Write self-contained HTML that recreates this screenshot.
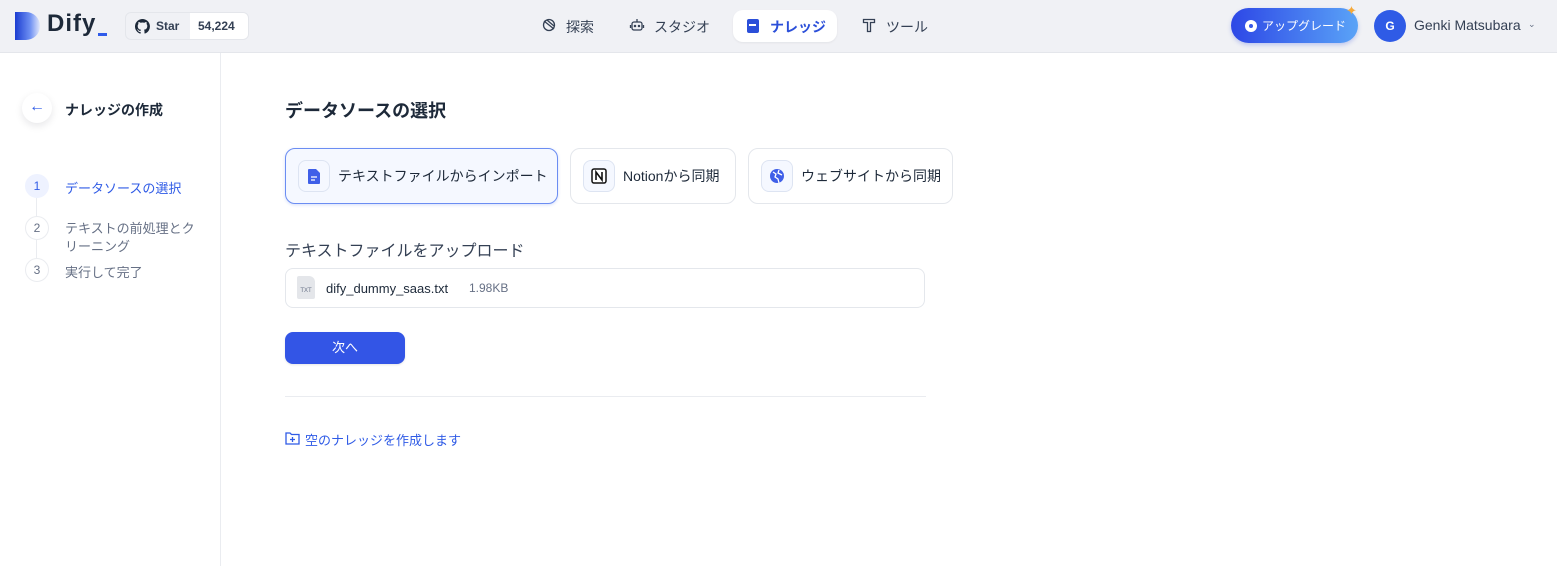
<!DOCTYPE html>
<html><head><meta charset="utf-8"><style>
*{box-sizing:border-box;margin:0;padding:0}
body{width:1557px;height:566px;overflow:hidden;background:#fff;font-family:"Liberation Sans","Noto Sans CJK JP",sans-serif;color:#1d2939;position:relative}
.hdr{position:absolute;left:0;top:0;width:1557px;height:53px;background:#f0f1f5;border-bottom:1px solid #e4e6eb}
.a{position:absolute}
.side{position:absolute;left:0;top:53px;width:221px;height:513px;border-right:1px solid #eaecf0}
.card{position:absolute;top:148px;height:56px;border:1px solid #e4e7ec;border-radius:10px;background:#fff;display:flex;align-items:center;font-size:14px;color:#1d2939}
.ic{width:32px;height:32px;border:1px solid #dde4f2;border-radius:8px;background:#f5f8ff;margin:0 8px 0 12px;display:flex;align-items:center;justify-content:center}
.step{position:absolute;left:25px;width:24px;height:24px;border-radius:50%;border:1px solid #eaecf0;font-size:12px;color:#667085;display:flex;align-items:center;justify-content:center;background:#fff}
</style></head><body>
<div class="hdr">
 <div class="a" style="left:15px;top:12px;width:25px;height:28px;border-radius:0 14px 14px 0;background:linear-gradient(90deg,#1b3cd1,#6d8ff2 60%,#e2e8fb)"></div>
 <div class="a" style="left:47px;top:10px;font-size:24px;font-weight:bold;color:#1d2939;letter-spacing:1px">Dify</div>
 <div class="a" style="left:98px;top:33px;width:9px;height:3px;background:#2f5bea"></div>
 <div class="a" style="left:125px;top:12px;width:124px;height:28px;border:1px solid #e4e6eb;border-radius:6px;background:#f0f1f5;overflow:hidden">
  <svg class="a" style="left:9px;top:6px" width="15" height="15" viewBox="0 0 16 16"><path fill="#1d2939" d="M8 0a8 8 0 0 0-2.5 15.6c.4 0 .5-.2.5-.4v-1.5c-2.2.5-2.7-1-2.7-1-.4-.9-.9-1.200-.9-1.200-.7-.5.1-.5.1-.5.8.1 1.200.8 1.200.8.7 1.300 1.900.9 2.300.7.1-.5.3-.9.5-1.100-1.800-.2-3.600-.9-3.600-4 0-.9.3-1.600.8-2.100-.1-.2-.4-1 .1-2.100 0 0 .7-.2 2.200.8a7.500 7.500 0 0 1 4 0c1.500-1 2.200-.8 2.200-.8.4 1.100.2 1.900.1 2.100.5.6.8 1.300.8 2.100 0 3.100-1.900 3.800-3.600 4 .3.3.6.8.6 1.500v2.200c0 .2.1.5.6.4A8 8 0 0 0 8 0z"/></svg>
  <div class="a" style="left:30px;top:6px;font-size:12px;font-weight:bold;color:#344054">Star</div>
  <div class="a" style="left:64px;top:0;width:60px;height:28px;background:#fff;font-size:12px;font-weight:bold;color:#344054;padding:6px 0 0 8px">54,224</div>
 </div>
 <svg class="a" style="left:542px;top:18px" width="14" height="14" viewBox="0 0 14 14" fill="none" stroke="#344054" stroke-width="1.3"><circle cx="7" cy="7" r="5.5"/><path d="M2 3l10 8M5 2l7 6"/></svg>
 <div class="a" style="left:566px;top:17px;font-size:14px;color:#344054">探索</div>
 <svg class="a" style="left:629px;top:17px" width="16" height="16" viewBox="0 0 16 16" fill="none" stroke="#344054" stroke-width="1.3"><rect x="3" y="5" width="10" height="8" rx="2"/><path d="M8 2v3M1.5 8v3M14.5 8v3"/><circle cx="6" cy="9" r=".6" fill="#344054"/><circle cx="10" cy="9" r=".6" fill="#344054"/></svg>
 <div class="a" style="left:654px;top:17px;font-size:14px;color:#344054">スタジオ</div>
 <div class="a" style="left:733px;top:10px;width:104px;height:32px;border-radius:10px;background:#fff;box-shadow:0 1px 2px rgba(0,0,0,.06)"></div>
 <div class="a" style="left:747px;top:19px;width:12px;height:14px;background:#2b4fd9;border-radius:2px"></div>
 <div class="a" style="left:749px;top:24px;width:7px;height:1.5px;background:#fff"></div>
 <div class="a" style="left:770px;top:17px;font-size:14px;font-weight:bold;color:#2b4fd9">ナレッジ</div>
 <svg class="a" style="left:862px;top:18px" width="14" height="15" viewBox="0 0 14 15" fill="none" stroke="#344054" stroke-width="1.3"><path d="M1.5 1.5h11v3h-4v9h-3v-9h-4z"/></svg>
 <div class="a" style="left:886px;top:17px;font-size:14px;color:#344054">ツール</div>
 <div class="a" style="left:1231px;top:8px;width:127px;height:35px;border-radius:18px;background:linear-gradient(90deg,#2d47e6,#5aa3f7);box-shadow:0 2px 4px rgba(40,70,220,.25)"></div>
 <div class="a" style="left:1245px;top:20px;width:12px;height:12px;border-radius:50%;background:#fff"></div>
 <div class="a" style="left:1249px;top:24px;width:4px;height:4px;border-radius:50%;background:#3659e8"></div>
 <div class="a" style="left:1262px;top:17px;font-size:12px;color:#fff">アップグレード</div>
 <div class="a" style="left:1346px;top:3px;font-size:13px;color:#f5a93a">✦</div>
 <div class="a" style="left:1374px;top:10px;width:32px;height:32px;border-radius:50%;background:#2f5be6;color:#fff;font-size:12px;font-weight:bold;text-align:center;line-height:32px">G</div>
 <div class="a" style="left:1414px;top:17px;font-size:14px;color:#344054">Genki Matsubara</div>
 <div class="a" style="left:1528px;top:19px;font-size:9px;color:#667085">⌄</div>
</div>
<div class="side">
 <div class="a" style="left:22px;top:40px;width:30px;height:30px;border-radius:50%;background:#fff;box-shadow:0 3px 8px rgba(16,24,40,.1);color:#2f5be6;font-size:16px;text-align:center;line-height:28px">←</div>
 <div class="a" style="left:65px;top:47px;font-size:14px;font-weight:bold;color:#1d2939">ナレッジの作成</div>
 <div class="a" style="left:36px;top:145px;width:1px;height:20px;background:#eaecf0"></div>
 <div class="a" style="left:36px;top:185px;width:1px;height:20px;background:#eaecf0"></div>
 <div class="step" style="top:121px;background:#eef2ff;border-color:#eef2ff;color:#2f5be6">1</div>
 <div class="step" style="top:163px">2</div>
 <div class="step" style="top:205px">3</div>
 <div class="a" style="left:65px;top:125px;font-size:13px;color:#2f5be6">データソースの選択</div>
 <div class="a" style="left:65px;top:167px;font-size:13px;color:#667085;line-height:18px;width:140px">テキストの前処理とクリーニング</div>
 <div class="a" style="left:65px;top:209px;font-size:13px;color:#667085">実行して完了</div>
</div>
<div class="a" style="left:285px;top:97px;font-size:18px;font-weight:bold;color:#1d2939">データソースの選択</div>
<div class="card" style="left:285px;width:273px;background:#f5f8ff;border-color:#6b8df2;box-shadow:0 1px 3px rgba(47,91,230,.2)"><div class="ic"><svg width="12" height="15" viewBox="0 0 12 15"><path fill="#3f5fe8" d="M1 0h7l4 4v10a1 1 0 0 1-1 1H1a1 1 0 0 1-1-1V1a1 1 0 0 1 1-1z"/><path stroke="#fff" stroke-width="1.2" d="M3 8h6M3 11h4"/></svg></div>テキストファイルからインポート</div>
<div class="card" style="left:570px;width:166px"><div class="ic" style="margin-left:12px"><svg width="16" height="16" viewBox="0 0 16 16"><rect x="1" y="1" width="14" height="14" rx="2" fill="#fff" stroke="#111" stroke-width="1.5"/><path d="M5 12V4l6 8V4" stroke="#111" stroke-width="1.6" fill="none"/></svg></div>Notionから同期</div>
<div class="card" style="left:748px;width:205px"><div class="ic"><svg width="16" height="16" viewBox="0 0 16 16"><circle cx="8" cy="8" r="7" fill="#3f5fe8"/><path d="M4 4l3 2-1 3 3 2 1 4M10 2l-1 3 4 2" stroke="#fff" stroke-width="1.3" fill="none"/></svg></div>ウェブサイトから同期</div>
<div class="a" style="left:285px;top:237px;font-size:16px;color:#344054">テキストファイルをアップロード</div>
<div class="a" style="left:285px;top:268px;width:640px;height:40px;border:1px solid #e4e7ec;border-radius:8px;background:#fff"></div>
<div class="a" style="left:297px;top:276px;width:18px;height:23px;background:#e4e6ea;border-radius:2px 6px 2px 2px;font-size:6px;color:#667085;text-align:center;padding-top:12px">TXT</div>
<div class="a" style="left:326px;top:281px;font-size:13px;color:#1d2939">dify_dummy_saas.txt</div>
<div class="a" style="left:469px;top:281px;font-size:12px;color:#667085">1.98KB</div>
<div class="a" style="left:285px;top:332px;width:120px;height:32px;border-radius:8px;background:#3355e6;color:#fff;font-size:13px;text-align:center;line-height:32px;box-shadow:0 1px 2px rgba(0,0,0,.1)">次へ</div>
<div class="a" style="left:285px;top:396px;width:641px;height:1px;background:#eaecf0"></div>
<svg class="a" style="left:285px;top:431px" width="15" height="14" viewBox="0 0 15 14" fill="none" stroke="#2f5be6" stroke-width="1.3"><path d="M1 2h4l1.5 1.5H14V13H1z"/><path d="M7.5 6v5M5 8.5h5"/></svg>
<div class="a" style="left:305px;top:430px;font-size:13px;color:#2f5be6">空のナレッジを作成します</div>
</body></html>
